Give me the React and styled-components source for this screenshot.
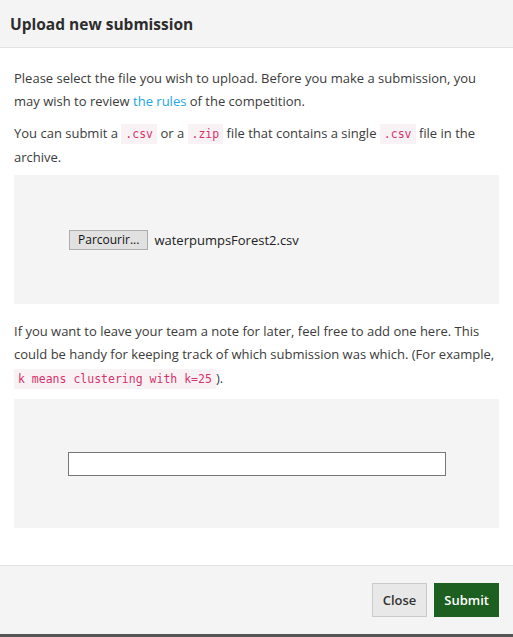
import React from "react";
import styled, { createGlobalStyle } from "styled-components";

const GlobalStyle = createGlobalStyle`
html, body {
  margin: 0;
  padding: 0;
  background: #fff;
}
body {
  font-family: "Open Sans", "Liberation Sans", sans-serif;
  color: #3b3b3b;
}
`;

const Modal = styled.div`
width: 513px;
height: 637px;
display: flex;
flex-direction: column;
background: #fff;
border-bottom: 3px solid #545454;
box-sizing: border-box;
`;

const Header = styled.div`
height: 47px;
background: #f4f4f4;
border-bottom: 1px solid #e2e2e2;
display: flex;
align-items: center;
padding: 0 10px;
flex-shrink: 0;
`;

const Title = styled.h4`
margin: 0;
font-size: 15.5px;
font-weight: 700;
color: #2d2d2d;
`;

const Body = styled.div`
flex: 1;
padding: 19px 14px 0 14px;
`;

const Text = styled.p`
margin: 0 0 ${props => props.gap || 8}px 0;
font-size: 13px;
line-height: 23.3px;
`;

const Link = styled.a`
color: #20a6e6;
text-decoration: none;
`;

const Code = styled.code`
font-family: "DejaVu Sans Mono", "Liberation Mono", monospace;
font-size: 11.5px;
color: #d6336c;
background: #f9f2f4;
padding: 3px 4px;
`;

const Well = styled.div`
height: 129px;
background: #f4f4f4;
display: flex;
align-items: center;
justify-content: ${props => props.center ? 'center' : 'flex-start'};
padding-left: ${props => props.center ? 0 : 55}px;
margin-bottom: ${props => props.gap || 0}px;
`;

const FileRow = styled.div`
display: flex;
align-items: center;
gap: 6px;
font-size: 13px;
color: #222;
`;

const BrowseButton = styled.button`
font-family: "Open Sans", "Liberation Sans", sans-serif;
font-size: 12px;
height: 20px;
padding: 0 8px;
background: #e1e1e1;
border: 1px solid #adadad;
color: #111;
border-radius: 0;
line-height: 16px;
`;

const NoteInput = styled.input`
width: 378px;
height: 24px;
box-sizing: border-box;
border: 1px solid #767676;
background: #fff;
`;

const Footer = styled.div`
height: 69px;
background: #f4f4f4;
border-top: 1px solid #e2e2e2;
display: flex;
align-items: center;
justify-content: flex-end;
gap: 7px;
padding: 0 14px;
box-sizing: border-box;
flex-shrink: 0;
`;

const Button = styled.button`
font-family: "Open Sans", "Liberation Sans", sans-serif;
font-size: 13px;
font-weight: 600;
height: 34px;
padding: 0 ${props => props.primary ? 9 : 10}px;
border-radius: 0;
cursor: pointer;
background: ${props => props.primary ? '#1d5e21' : '#e8e8e8'};
color: ${props => props.primary ? '#fff' : '#333'};
border: 1px solid ${props => props.primary ? '#1d5e21' : '#cacaca'};
`;

const App = () => {
    return (
        <>
            <GlobalStyle />
            <Modal>
                <Header>
                    <Title>Upload new submission</Title>
                </Header>
                <Body>
                    <Text>
                        Please select the file you wish to upload. Before you make a submission, you
                        may wish to review <Link href="#">the rules</Link> of the competition.
                    </Text>
                    <Text gap={6}>
                        You can submit a <Code>.csv</Code> or a <Code>.zip</Code> file that contains a single <Code>.csv</Code> file in the archive.
                    </Text>
                    <Well gap={16}>
                        <FileRow>
                            <BrowseButton>Parcourir...</BrowseButton>
                            <span>waterpumpsForest2.csv</span>
                        </FileRow>
                    </Well>
                    <Text>
                        If you want to leave your team a note for later, feel free to add one here. This
                        could be handy for keeping track of which submission was which. (For example,
                        {' '}<Code>k means clustering with k=25</Code>).
                    </Text>
                    <Well center>
                        <NoteInput type="text" />
                    </Well>
                </Body>
                <Footer>
                    <Button>Close</Button>
                    <Button primary>Submit</Button>
                </Footer>
            </Modal>
        </>
    )
}

export default App
